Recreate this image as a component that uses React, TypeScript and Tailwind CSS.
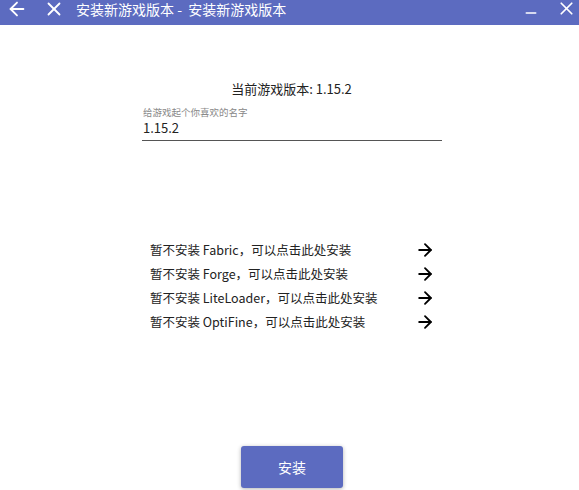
import { ArrowLeft, ArrowRight, Minus, X } from 'lucide-react'

const FONT = { fontFamily: '"Noto Sans CJK SC", "Noto Sans", sans-serif' }

const loaders = ['Fabric', 'Forge', 'LiteLoader', 'OptiFine']

export default function App() {
  return (
    <div className="flex h-[490px] w-[579px] flex-col overflow-hidden bg-white" style={FONT}>
      {/* 标题栏 */}
      <div className="flex h-[25px] shrink-0 items-start bg-[#5c6bc0] text-white">
        <div className="flex h-[18px] items-center">
          <ArrowLeft size={22} strokeWidth={2} className="ml-[6px]" />
          <X size={22} strokeWidth={2} className="ml-[15px]" />
          <span className="ml-[11px] text-[14px] leading-[16px]">安装新游戏版本 -&nbsp; 安装新游戏版本</span>
        </div>
        <div className="ml-auto flex h-[22px] items-center">
          <Minus size={16} strokeWidth={2.5} className="mt-[4px]" />
          <X size={21} strokeWidth={2} className="ml-[17px] mr-[2px] -mt-[6px]" />
        </div>
      </div>

      <div className="mt-[55px] pl-[4px] text-center text-[13px] leading-[18px] text-[#222]">当前游戏版本: 1.15.2</div>

      <div className="ml-[142px] mt-[9px] w-[300px] border-b border-[#555]">
        <div className="pl-[1px] text-[9.5px] leading-[11px] text-[#888]">给游戏起个你喜欢的名字</div>
        <div className="pl-[1px] pb-[4px] pt-[1px] text-[13px] leading-[17px] text-[#222]">1.15.2</div>
      </div>

      <div className="ml-[150px] mt-[97px] flex w-[285px] flex-col">
        {loaders.map((name) => (
          <div key={name} className="flex h-[24px] items-center justify-between text-[12.5px] text-[#222]">
            <span>暂不安装 {name}，可以点击此处安装</span>
            <ArrowRight size={20} strokeWidth={2.2} className="text-black" />
          </div>
        ))}
      </div>

      <div className="mt-auto mb-[2px] flex justify-center pl-[5px]">
        <button className="h-[42px] w-[102px] rounded-[3px] bg-[#5c6bc0] text-[14px] text-white shadow-[0_1px_4px_rgba(0,0,0,0.3)]">
          安装
        </button>
      </div>
    </div>
  )
}
